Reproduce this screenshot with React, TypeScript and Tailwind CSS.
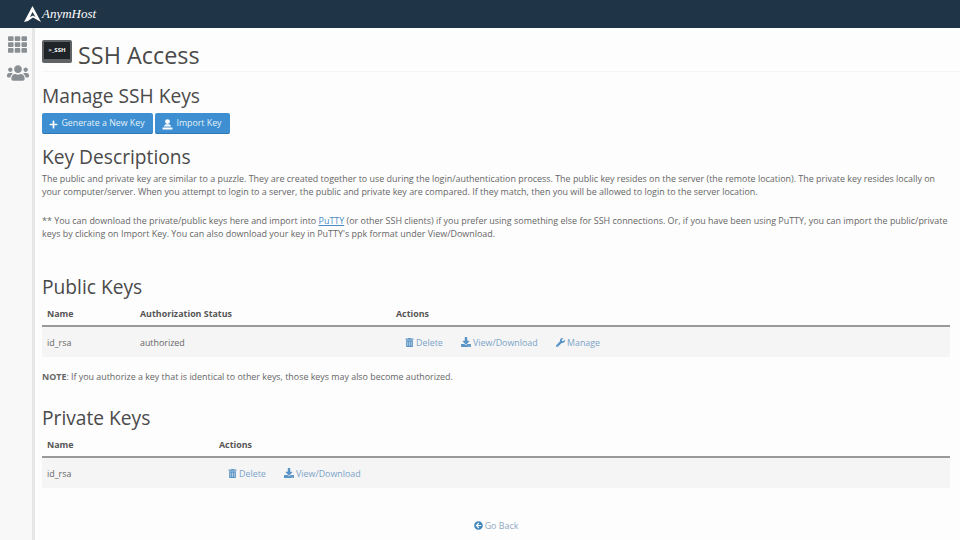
import React from "react";
import { FaPlus, FaTrashAlt, FaDownload, FaWrench, FaArrowCircleLeft, FaUsers, FaTh } from "react-icons/fa";

function Act({ icon, label, w }: { icon: React.ReactNode; label: string; w: string }) {
  return (
    <span className={`flex items-center gap-[2px] text-[#7ba3c8] ${w}`}>
      <span className="text-[#5a94c6]">{icon}</span>
      {label}
    </span>
  );
}

function KeyTable({ col1, status, children }: { col1: string; status?: boolean; children: React.ReactNode }) {
  return (
    <div className="mr-[10px] text-[8.9px] text-[#666]">
      <div className="flex h-[25px] items-center border-b-2 border-[#999] pl-[5px] pt-[1px] font-bold text-[#555]">
        <span className={col1}>Name</span>
        {status ? <span className="w-[256px]">Authorization Status</span> : null}
        <span>Actions</span>
      </div>
      <div className="flex h-[30px] items-center bg-[#f5f5f5] pl-[5px] pt-[1px]">{children}</div>
    </div>
  );
}

function ImportIcon() {
  return (
    <svg width="11" height="11" viewBox="0 0 11 11" fill="white">
      <circle cx="5.5" cy="2.6" r="2.4" />
      <path d="M2 7.6 C2 5.8 3.5 5.2 5.5 5.2 S9 5.8 9 7.6 Z" />
      <rect x="0.5" y="8.4" width="10" height="2" rx="0.4" />
    </svg>
  );
}

export default function App() {
  return (
    <div className="flex h-[540px] w-[960px] flex-col overflow-hidden bg-[#fdfdfd] font-['Open_Sans',sans-serif] text-[#4a4a4a]">
      <header className="flex h-[28px] shrink-0 items-center bg-[#1f3446] pl-[24px]">
        <svg width="17" height="16" viewBox="0 0 17 16" className="text-white">
          <path d="M8.5 0 L17 16 L9 11.5 L4 15 L0 16 Z M8.5 6 L6 11 L9 9.5 L11.5 11 Z" fill="currentColor" fillRule="evenodd" />
        </svg>
        <span className="ml-[1px] font-['Liberation_Serif',serif] text-[13px] text-white italic">AnymHost</span>
      </header>
      <div className="flex min-h-0 flex-1">
        <aside className="flex w-[35px] shrink-0 flex-col items-center border-r-[3px] border-[#e6e6e6] bg-[#f8f8f8] pl-[3px] pt-[7px] text-[#8a8f94]">
          <FaTh size={19} />
          <FaUsers size={22} className="mt-[8px]" />
        </aside>
        <main className="min-w-0 flex-1 pl-[7px]">
          <div className="flex h-[44px] items-start gap-[6px] border-b border-[#f5f5f5]">
            <div className="mt-[12px] flex h-[23px] w-[30px] flex-col items-center justify-center rounded-[2px] border-2 border-b-[4px] border-[#5f6366] bg-[#1f2428] text-[6px] font-bold text-white">
              &gt;_SSH
            </div>
            <h1 className="mt-[15px] text-[23.4px] leading-[24px]">SSH Access</h1>
          </div>
          <h2 className="mt-[12px] text-[19.2px] leading-[24px]">Manage SSH Keys</h2>
          <div className="mt-[5px] flex gap-[2px] text-[8.8px] text-[#e6f1fa]">
            <button className="flex h-[21px] w-[111px] items-center justify-center gap-[3px] rounded-[2px] border-b border-[#2f77b3] bg-[#3d8fd1] pr-[1px] pt-[2px]">
              <FaPlus size={9} className="text-white" /> Generate a New Key
            </button>
            <button className="flex h-[21px] w-[75px] items-center justify-center gap-[3px] rounded-[2px] border-b border-[#2f77b3] bg-[#3d8fd1] pr-[1px] pt-[2px]">
              <ImportIcon /> Import Key
            </button>
          </div>
          <h2 className="mt-[11px] text-[19.2px] leading-[24px]">Key Descriptions</h2>
          <p className="mr-[10px] mt-[3px] text-[8.93px] leading-[13px] text-[#666]">
            The public and private key are similar to a puzzle. They are created together to use during the login/authentication process. The public key resides on the server (the remote location). The private key resides locally on your computer/server. When you attempt to login to a server, the public and private key are compared. If they match, then you will be allowed to login to the server location.
          </p>
          <p className="mr-[10px] mt-[17px] text-[8.95px] leading-[12.5px] text-[#666]">
            ** You can download the private/public keys here and import into <span className="text-[#4a8cc4] underline">PuTTY</span> (or other SSH clients) if you prefer using something else for SSH connections. Or, if you have been using PuTTY, you can import the public/private keys by clicking on Import Key. You can also download your key in PuTTY's ppk format under View/Download.
          </p>
          <h2 className="mt-[35px] text-[19.2px] leading-[24px]">Public Keys</h2>
          <div className="mt-[3px]">
            <KeyTable col1="w-[93px]" status>
              <span className="w-[93px]">id_rsa</span>
              <span className="w-[265px]">authorized</span>
              <Act icon={<FaTrashAlt size={9} />} label="Delete" w="w-[56px]" />
              <Act icon={<FaDownload size={10} />} label="View/Download" w="w-[95px]" />
              <Act icon={<FaWrench size={9} />} label="Manage" w="" />
            </KeyTable>
          </div>
          <p className="mt-[13px] text-[8.9px] leading-[13px] text-[#666]">
            <b>NOTE</b>: If you authorize a key that is identical to other keys, those keys may also become authorized.
          </p>
          <h2 className="mt-[23px] text-[19.2px] leading-[24px]">Private Keys</h2>
          <div className="mt-[3px]">
            <KeyTable col1="w-[172px]">
              <span className="w-[181px]">id_rsa</span>
              <Act icon={<FaTrashAlt size={9} />} label="Delete" w="w-[56px]" />
              <Act icon={<FaDownload size={10} />} label="View/Download" w="" />
            </KeyTable>
          </div>
          <div className="mt-[31px] flex items-center justify-center gap-[2px] pr-[10px] text-[8.9px] text-[#8fa9c2]">
            <FaArrowCircleLeft size={9} className="text-[#3f86bd]" /> Go Back
          </div>
        </main>
      </div>
    </div>
  );
}
